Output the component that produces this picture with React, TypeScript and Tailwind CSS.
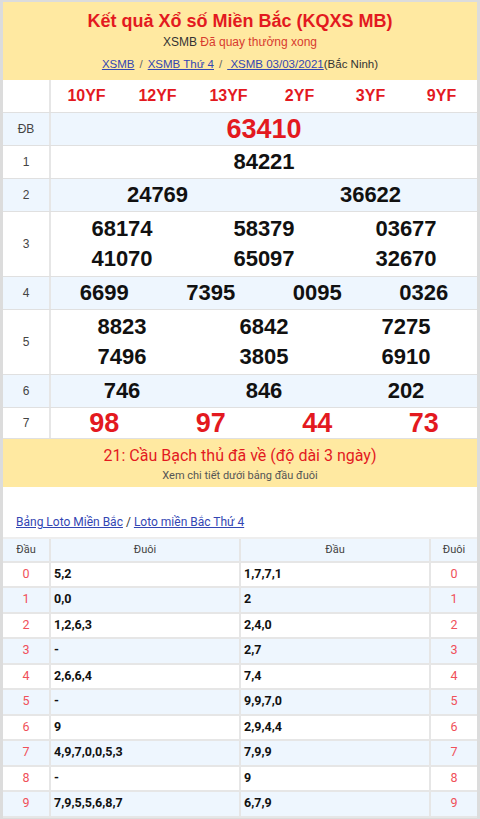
const codes = ['10YF', '12YF', '13YF', '2YF', '3YF', '9YF'];

type Prize = { label: string; cols: number; nums: string[]; big?: boolean };

const prizes: Prize[] = [
  { label: 'ĐB', cols: 1, nums: ['63410'], big: true },
  { label: '1', cols: 1, nums: ['84221'] },
  { label: '2', cols: 2, nums: ['24769', '36622'] },
  { label: '3', cols: 3, nums: ['68174', '58379', '03677', '41070', '65097', '32670'] },
  { label: '4', cols: 4, nums: ['6699', '7395', '0095', '0326'] },
  { label: '5', cols: 3, nums: ['8823', '6842', '7275', '7496', '3805', '6910'] },
  { label: '6', cols: 3, nums: ['746', '846', '202'] },
  { label: '7', cols: 4, nums: ['98', '97', '44', '73'], big: true },
];

const gridCols: Record<number, string> = {
  1: 'grid-cols-1',
  2: 'grid-cols-2',
  3: 'grid-cols-3',
  4: 'grid-cols-4',
};

const loto = [
  ['5,2', '1,7,7,1'],
  ['0,0', '2'],
  ['1,2,6,3', '2,4,0'],
  ['-', '2,7'],
  ['2,6,6,4', '7,4'],
  ['-', '9,9,7,0'],
  ['9', '2,9,4,4'],
  ['4,9,7,0,0,5,3', '7,9,9'],
  ['-', '9'],
  ['7,9,5,5,6,8,7', '6,7,9'],
];

export default function App() {
  return (
    <div className="w-[480px] bg-white border-x-[3px] border-t-2 border-b-[3px] border-[#dcdcdc] font-['Liberation_Sans',Arial,sans-serif]">
      <div className="bg-[#ffe9a1] h-[78px] flex flex-col items-center pt-[8px]">
        <h1 className="text-[18px] font-bold text-[#e3191f] leading-[22px]">Kết quả Xổ số Miền Bắc (KQXS MB)</h1>
        <p className="text-[12px] leading-[16px] mt-[2px] text-[#333]">
          XSMB <span className="text-[#d83b2e]">Đã quay thưởng xong</span>
        </p>
        <p className="text-[11.5px] leading-[16px] mt-[6px] text-[#333]">
          <a className="underline text-[#3346b3]">XSMB</a>
          <span className="text-[#666] mx-[5px]">/</span>
          <a className="underline text-[#3346b3]">XSMB Thứ 4</a>
          <span className="text-[#666] mx-[5px]">/</span>
          <a className="underline text-[#3346b3]"> XSMB 03/03/2021</a>(Bắc Ninh)
        </p>
      </div>

      <div className="flex h-[33px] border-b border-[#e0e0e0]">
        <div className="w-[48px] shrink-0 border-r-2 border-[#e6e6e6]" />
        <div className="flex-1 grid grid-cols-6 items-center">
          {codes.map((c) => (
            <span key={c} className="text-center text-[16px] font-bold text-[#e3191f]">{c}</span>
          ))}
        </div>
      </div>

      {prizes.map((p, i) => {
        const multi = p.nums.length > p.cols;
        return (
          <div key={p.label} className={`flex border-b border-[#e0e0e0] ${i % 2 === 0 ? 'bg-[#eef6fe]' : 'bg-white'}`}>
            <div className="w-[48px] shrink-0 border-r-2 border-[#e6e6e6] flex items-center justify-center text-[12px] text-[#444]">
              {p.label}
            </div>
            <div className={`flex-1 grid ${gridCols[p.cols]} items-center ${multi ? 'py-[2px]' : ''}`}>
              {p.nums.map((n, j) => (
                <span
                  key={j}
                  className={`text-center font-bold ${
                    p.big
                      ? 'text-[27px] text-[#e3191f] ' + (p.label === '7' ? 'leading-[30px]' : 'leading-[32px]')
                      : 'text-[22px] text-[#111] ' + (multi ? 'leading-[30px]' : 'leading-[32px]')
                  }`}
                >
                  {n}
                </span>
              ))}
            </div>
          </div>
        );
      })}

      <div className="bg-[#ffe9a1] h-[48px] flex flex-col items-center pt-[6px] font-['Roboto',sans-serif]">
        <p className="text-[16px] leading-[22px] text-[#e3191f]">21: Cầu Bạch thủ đã về (độ dài 3 ngày)</p>
        <p className="text-[11px] leading-[16px] mt-[1px] text-[#555]">Xem chi tiết dưới bảng đầu đuôi</p>
      </div>

      <div className="pt-[27px] pb-[7px] pl-[13px] text-[12px] leading-[16px] font-['Roboto',sans-serif] text-[#333]">
        <a className="underline text-[#3346b3]">Bảng Loto Miền Bắc</a>
        <span className="mx-[3px]">/</span>
        <a className="underline text-[#3346b3]">Loto miền Bắc Thứ 4</a>
      </div>

      <div className="font-['Roboto',sans-serif] border-t-2 border-[#eeeeee]">
        <div className="flex h-[23.5px] bg-[#eef6fe] border-b-2 border-[#e6e6e6] text-[11px] text-[#444]">
          <div className="w-[48px] shrink-0 border-r-2 border-[#e6e6e6] flex items-center justify-center">Đầu</div>
          <div className="w-[190px] shrink-0 border-r-2 border-[#e6e6e6] flex items-center justify-center">Đuôi</div>
          <div className="w-[190px] shrink-0 border-r-2 border-[#e6e6e6] flex items-center justify-center">Đầu</div>
          <div className="flex-1 flex items-center justify-center">Đuôi</div>
        </div>
        {loto.map((r, i) => (
          <div key={i} className={`flex h-[25.5px] border-b-2 border-[#e6e6e6] text-[12.5px] ${i % 2 === 1 ? 'bg-[#eef6fe]' : 'bg-white'}`}>
            <div className="w-[48px] shrink-0 border-r-2 border-[#e6e6e6] flex items-center justify-center text-[#f0505a]">{i}</div>
            <div className="w-[190px] shrink-0 border-r-2 border-[#e6e6e6] flex items-center pl-[3px] font-bold text-[#111]">{r[0]}</div>
            <div className="w-[190px] shrink-0 border-r-2 border-[#e6e6e6] flex items-center pl-[3px] font-bold text-[#111]">{r[1]}</div>
            <div className="flex-1 flex items-center justify-center text-[#f0505a]">{i}</div>
          </div>
        ))}
      </div>
    </div>
  );
}
